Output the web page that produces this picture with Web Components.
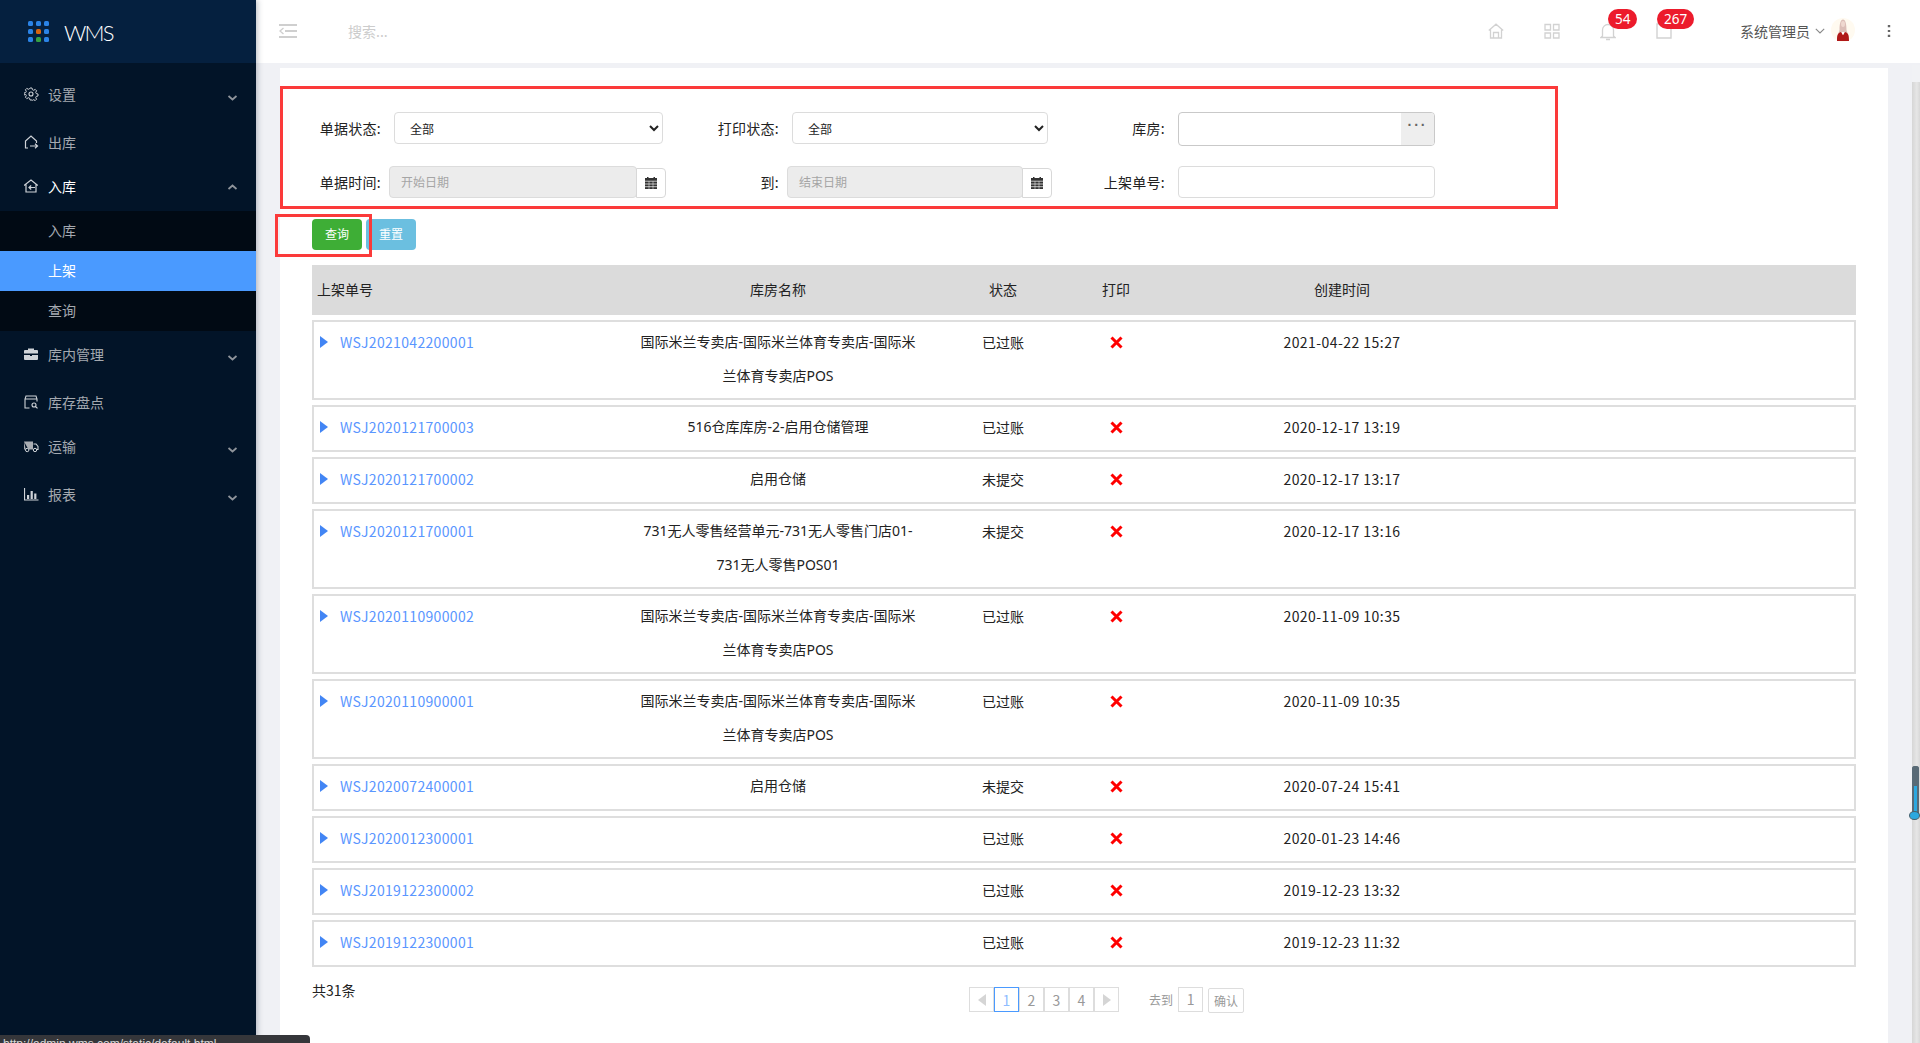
<!DOCTYPE html>
<html lang="zh-CN">
<head>
<meta charset="utf-8">
<title>WMS</title>
<style>
  html, body { margin: 0; height: 100%; overflow: hidden; }
  body { font-family: "Noto Sans CJK SC", "Noto Sans", sans-serif; font-size: 14px; color: #222; }
</style>
</head>
<body>
<wms-app>
  <wms-sidebar slot="sidebar">
    <wms-nav-item icon="gear" label="设置" arrow="down" style="--h:48px"></wms-nav-item>
    <wms-nav-item icon="out" label="出库" style="--h:48px"></wms-nav-item>
    <wms-nav-item icon="in" label="入库" arrow="up" open style="--h:40px;--mb:4px"></wms-nav-item>
    <wms-sub-item>入库</wms-sub-item>
    <wms-sub-item active>上架</wms-sub-item>
    <wms-sub-item>查询</wms-sub-item>
    <wms-nav-item icon="box" label="库内管理" arrow="down" style="--h:48px"></wms-nav-item>
    <wms-nav-item icon="check" label="库存盘点" style="--h:48px"></wms-nav-item>
    <wms-nav-item icon="truck" label="运输" arrow="down" style="--h:40px;--mb:4px"></wms-nav-item>
    <wms-nav-item icon="chart" label="报表" arrow="down" style="--h:48px"></wms-nav-item>
  </wms-sidebar>
  <wms-topbar slot="topbar"></wms-topbar>
  <wms-filter>
    <wms-select-field label="单据状态:" style="--lw:69px;--gap:13px;--cw:269px">全部</wms-select-field>
    <wms-select-field label="打印状态:" style="--lw:99px;--gap:13px;--cw:256px">全部</wms-select-field>
    <wms-picker-field label="库房:" style="--lw:80px;--gap:13px;--cw:257px"></wms-picker-field>
    <wms-date-field label="单据时间:" placeholder="开始日期" style="--lw:69px;--gap:8px;--cw:248px"></wms-date-field>
    <wms-date-field label="到:" placeholder="结束日期" style="--lw:99px;--gap:8px;--cw:236px"></wms-date-field>
    <wms-text-field label="上架单号:" style="--lw:80px;--gap:13px;--cw:257px"></wms-text-field>
  </wms-filter>
  <wms-actions></wms-actions>
  <wms-table-head></wms-table-head>
  <wms-row code="WSJ2021042200001" status="已过账" time="2021-04-22 15:27">国际米兰专卖店-国际米兰体育专卖店-国际米兰体育专卖店POS</wms-row>
  <wms-row code="WSJ2020121700003" status="已过账" time="2020-12-17 13:19">516仓库库房-2-启用仓储管理</wms-row>
  <wms-row code="WSJ2020121700002" status="未提交" time="2020-12-17 13:17">启用仓储</wms-row>
  <wms-row code="WSJ2020121700001" status="未提交" time="2020-12-17 13:16">731无人零售经营单元-731无人零售门店01-731无人零售POS01</wms-row>
  <wms-row code="WSJ2020110900002" status="已过账" time="2020-11-09 10:35">国际米兰专卖店-国际米兰体育专卖店-国际米兰体育专卖店POS</wms-row>
  <wms-row code="WSJ2020110900001" status="已过账" time="2020-11-09 10:35">国际米兰专卖店-国际米兰体育专卖店-国际米兰体育专卖店POS</wms-row>
  <wms-row code="WSJ2020072400001" status="未提交" time="2020-07-24 15:41">启用仓储</wms-row>
  <wms-row code="WSJ2020012300001" status="已过账" time="2020-01-23 14:46"></wms-row>
  <wms-row code="WSJ2019122300002" status="已过账" time="2019-12-23 13:32"></wms-row>
  <wms-row code="WSJ2019122300001" status="已过账" time="2019-12-23 11:32"></wms-row>
  <wms-pager total="共31条"></wms-pager>
</wms-app>

<script>
const NAV_ICONS = {
  gear: '<circle cx="7" cy="7" r="2" fill="none" stroke="currentColor" stroke-width="1.1"/><path d="M6 1h2l.4 1.7 1.3.6 1.5-.9 1.4 1.4-.9 1.5.6 1.3 1.7.4v2l-1.7.4-.6 1.3.9 1.5-1.4 1.4-1.5-.9-1.3.6L8 13H6l-.4-1.7-1.3-.6-1.5.9-1.4-1.4.9-1.5-.6-1.3L0 8V6l1.7-.4.6-1.3-.9-1.5 1.4-1.4 1.5.9 1.3-.6z" fill="none" stroke="currentColor" stroke-width="1"/>',
  out: '<path d="M4 13H1.5V6L7 1l5.5 5v2M1.5 13" fill="none" stroke="currentColor" stroke-width="1.2"/><path d="M6 11h7.5M11 8.8l2.5 2.2-2.5 2.2" fill="none" stroke="currentColor" stroke-width="1.2"/>',
  in: '<path d="M0 6.5 7 1l6.8 5.5M2 5.5V13h10V5.5" fill="none" stroke="currentColor" stroke-width="1.2"/><path d="M11 8.5H5.2M7.2 6.5 5 8.5l2.2 2" fill="none" stroke="currentColor" stroke-width="1.2"/>',
  box: '<path d="M4 3V1.5h6V3h3a1 1 0 0 1 1 1v2.5H0V4a1 1 0 0 1 1-1z" fill="currentColor"/><path d="M0 8h6v1h2V8h6v4a1 1 0 0 1-1 1H1a1 1 0 0 1-1-1z" fill="currentColor"/>',
  check: '<path d="M5.5 13H1V4l1-3h10l1 3v2.5M1 4h12" fill="none" stroke="currentColor" stroke-width="1.1"/><circle cx="10" cy="10" r="2" fill="none" stroke="currentColor" stroke-width="1.1"/><path d="m11.5 11.5 2 1.8" stroke="currentColor" stroke-width="1.1"/>',
  truck: '<path d="M0 2.5h9v8H4.5M1.8 10.5H0v-8" fill="#a9adb3"/><path d="M9.5 5H12l2 2.4v3.1h-1" fill="none" stroke="currentColor" stroke-width="1.1"/><circle cx="3.2" cy="11" r="1.7" fill="#021428" stroke="currentColor"/><circle cx="11" cy="11" r="1.7" fill="#021428" stroke="currentColor"/>',
  chart: '<path d="M.5 1v12h14" fill="none" stroke="currentColor" stroke-width="1.2"/><path d="M3 8h2.2v4H3zM6.6 4h2.2v8H6.6zM10.2 6.5h2.2V12h-2.2z" fill="currentColor"/>'
};

class WmsApp extends HTMLElement {
  constructor() {
    super();
    this.attachShadow({ mode: 'open' }).innerHTML = `
      <style>
        :host { display: flex; height: 100vh; background: #f0f1f5; position: relative; overflow: hidden; }
        .side { flex: 0 0 256px; position: relative; z-index: 2; box-shadow: 1px 0 6px rgba(40, 50, 70, .35); }
        .main { flex: 1 1 auto; min-width: 0; display: flex; flex-direction: column; }
        .panel {
          flex: 1 1 auto; min-height: 0;
          margin: 5px 32px 0 24px; padding: 44px 32px 0;
          background: #fff; box-sizing: border-box;
        }
        .mark { position: absolute; border: 3px solid #fb3a3a; box-sizing: border-box; z-index: 3; pointer-events: none; }
        .m1 { left: 280px; top: 86px; width: 1278px; height: 123px; }
        .m2 { left: 275px; top: 214px; width: 97px; height: 43px; }
        .status {
          position: absolute; left: 0; bottom: 0; width: 310px; height: 8px; z-index: 4;
          background: #35363a; border-top-right-radius: 4px; overflow: hidden;
          color: #d8d8d8; font: 12px/18px "Liberation Sans", sans-serif; padding-left: 3px; box-sizing: border-box;
        }
      </style>
      <div class="side"><slot name="sidebar"></slot></div>
      <div class="main">
        <slot name="topbar"></slot>
        <div class="panel"><slot></slot></div>
      </div>
      <wms-scrollbar></wms-scrollbar>
      <div class="mark m1"></div>
      <div class="mark m2"></div>
      <div class="status">http://admin.wms.com/static/default.html</div>`;
  }
}

class WmsSidebar extends HTMLElement {
  constructor() {
    super();
    this.attachShadow({ mode: 'open' }).innerHTML = `
      <style>
        :host { display: flex; flex-direction: column; height: 100%; background: #021428; }
        .logo { flex: 0 0 63px; display: flex; align-items: center; background: #05203f; }
        .dots { display: grid; grid-template-columns: repeat(3, 5px); gap: 3px; margin-left: 28px; }
        .dots i { width: 5px; height: 5px; border-radius: 1.5px; background: #2b83e6; }
        .dots i.o { background: #d9640f; }
        .dots i.g { background: #36a043; }
        .name { margin-left: 15px; margin-top: 2px; color: #fff; font: 300 22px/1 Lato, sans-serif; letter-spacing: -1.8px; }
        nav { padding-top: 8px; display: flex; flex-direction: column; }
      </style>
      <div class="logo">
        <div class="dots"><i></i><i></i><i></i><i></i><i class="o"></i><i></i><i></i><i class="g"></i><i></i></div>
        <div class="name">WMS</div>
      </div>
      <nav><slot></slot></nav>`;
  }
}

class WmsNavItem extends HTMLElement {
  constructor() {
    super();
    this.attachShadow({ mode: 'open' });
  }

  connectedCallback() {
    const arrow = this.getAttribute('arrow');
    const chevron = arrow === 'up' ? 'M1.5 6 5.5 2.5 9.5 6' : 'M1.5 2 5.5 5.5 9.5 2';
    this.shadowRoot.innerHTML = `
      <style>
        :host {
          display: flex; align-items: center; height: var(--h, 48px); margin-bottom: var(--mb, 0);
          padding-left: 24px; color: #a4a9b0; font-size: 14px;
        }
        :host([open]) { color: #fff; }
        .ico { width: 15px; height: 14px; color: #cfd3d8; flex: none; margin-top: -2px; }
        .label { margin-left: 9px; flex: 1 1 auto; margin-top: -2px; }
        .chev { width: 11px; height: 8px; margin-right: 18px; margin-top: 5px; color: #8f949b; }
        :host([open]) .chev { margin-top: 0; }
      </style>
      <svg class="ico" viewBox="0 0 15 14">${NAV_ICONS[this.getAttribute('icon')]}</svg>
      <span class="label">${this.getAttribute('label')}</span>
      ${arrow ? `<svg class="chev" viewBox="0 0 11 8"><path d="${chevron}" fill="none" stroke="currentColor" stroke-width="1.8"/></svg>` : ''}`;
  }
}

class WmsSubItem extends HTMLElement {
  constructor() {
    super();
    this.attachShadow({ mode: 'open' }).innerHTML = `
      <style>
        :host {
          display: flex; align-items: center; height: 40px; padding: 0 0 2px 48px; box-sizing: border-box;
          background: #010a14; color: #a4a9b0; font-size: 14px;
        }
        :host([active]) { background: #4a9aff; color: #fff; }
      </style>
      <slot></slot>`;
  }
}

class WmsTopbar extends HTMLElement {
  constructor() {
    super();
    this.attachShadow({ mode: 'open' }).innerHTML = `
      <style>
        :host { display: flex; align-items: center; flex: 0 0 63px; background: #fff; color: #555; font-size: 14px; }
        svg { display: block; flex: none; }
        .menu { margin: -2px 0 0 23px; }
        .search { margin-left: 51px; color: #ccc; flex: 1 1 auto; margin-top: -1px; }
        .tool { position: relative; width: 18px; height: 18px; margin-right: 38px; color: #d2d2d2; }
        .last { margin-right: 66px; }
        .user { margin-top: -2px; }
        .chev { margin: -1px 6px 0 5px; }
        .avatar { margin-top: -3px; }
        .dots { margin: -2px 29px 0 32px; }
      </style>
      <svg class="menu" width="18" height="14" viewBox="0 0 18 14"><path d="M0 1h18M6 7h12M0 13h18" stroke="#cfcfcf" stroke-width="2"/><path d="M4.5 4 1 7l3.5 3" fill="none" stroke="#cfcfcf" stroke-width="1.4"/></svg>
      <div class="search">搜索...</div>
      <div class="tool"><svg width="16" height="16" viewBox="0 0 16 16"><path d="M.8 7.5 8 1.2l7.2 6.3M2.5 6.5V15h11V6.5M5.5 15V9.5h5V15" fill="none" stroke="currentColor" stroke-width="1.3"/></svg></div>
      <div class="tool"><svg width="16" height="16" viewBox="0 0 16 16"><path d="M1 1.5h5.5v5.5H1zM9.5 1.5H15v5.5H9.5zM1 10h5.5v5H1zM9.5 10H15v5H9.5z" fill="none" stroke="currentColor" stroke-width="1.3"/></svg></div>
      <div class="tool"><svg width="16" height="18" viewBox="0 0 16 18"><path d="M2.5 13V7a5.5 5.5 0 0 1 11 0v6l1.5 1.5H1zM6 16.5h4" fill="none" stroke="currentColor" stroke-width="1.3"/></svg><wms-badge style="left:8px;top:-13.5px">54</wms-badge></div>
      <div class="tool last"><svg width="16" height="16" viewBox="0 0 16 16"><path d="M1 1h14v14H1z" fill="none" stroke="currentColor" stroke-width="1.4"/></svg><wms-badge style="left:1px;top:-13.5px">267</wms-badge></div>
      <span class="user">系统管理员</span>
      <svg class="chev" width="10" height="6" viewBox="0 0 10 6"><path d="M.8.8 5 5l4.2-4.2" fill="none" stroke="#888" stroke-width="1.1"/></svg>
      <svg class="avatar" width="24" height="24" viewBox="0 0 24 24"><circle cx="12" cy="12" r="12" fill="#fffaf0"/><path d="M8.5 12c0-6 1-10.5 3.5-10.5s3.500 4.500 3.500 10.500l1 3h-9z" fill="#dcbeb8"/><ellipse cx="12" cy="6" rx="2" ry="3" fill="#efd8d0"/><path d="M6 23c0-6 .5-8 4-9l2 3 2-3c3.500 1 4 3 4 9z" fill="#b01818"/><path d="m10.5 14 1.5 3 1.5-3z" fill="#fff"/></svg>
      <svg class="dots" width="4" height="14" viewBox="0 0 4 14"><path d="M.8 1h2.4v2.2H.8zM.8 5.9h2.4v2.2H.8zM.8 10.8h2.4V13H.8z" fill="#666"/></svg>`;
  }
}

class WmsBadge extends HTMLElement {
  constructor() {
    super();
    this.attachShadow({ mode: 'open' }).innerHTML = `
      <style>
        :host {
          position: absolute; display: block; padding: 0 7px; height: 20px; border-radius: 10px;
          background: #ec1b2c; color: #fff; font: 13.5px/20px "Noto Sans", sans-serif; white-space: nowrap;
        }
      </style>
      <slot></slot>`;
  }
}

class WmsFilter extends HTMLElement {
  constructor() {
    super();
    this.attachShadow({ mode: 'open' }).innerHTML = `
      <style>
        :host { display: grid; grid-template-columns: 368px 405px 1fr; grid-template-rows: 34px 32px; row-gap: 20px; margin-bottom: 21px; }
      </style>
      <slot></slot>`;
  }
}

const FIELD_STYLE = `
  :host { display: flex; align-items: flex-start; color: #222; }
  .label { width: var(--lw); margin-right: var(--gap); flex: none; text-align: right; line-height: 32px; font-size: 14px; white-space: nowrap; letter-spacing: .25px; }
  .ctl { box-sizing: border-box; width: var(--cw); height: 32px; border: 1px solid #dcdcdc; border-radius: 4px; background: #fff; flex: none; font-size: 12px; }
`;

class WmsSelectField extends HTMLElement {
  constructor() {
    super();
    this.attachShadow({ mode: 'open' });
  }

  connectedCallback() {
    this.shadowRoot.innerHTML = `
      <style>${FIELD_STYLE}
        select { padding: 0 0 0 11px; font-family: inherit; color: #222; outline: none; }
      </style>
      <div class="label">${this.getAttribute('label')}</div>
      <select class="ctl"><option>${this.textContent}</option></select>`;
  }
}

class WmsDateField extends HTMLElement {
  constructor() {
    super();
    this.attachShadow({ mode: 'open' });
  }

  connectedCallback() {
    this.shadowRoot.innerHTML = `
      <style>${FIELD_STYLE}
        .ctl { background: #ececec; color: #a5a5a5; padding-left: 11px; line-height: 30px; }
        .addon { box-sizing: border-box; width: 30px; height: 30px; margin-top: 2px; margin-left: -1px; background: #fff;
          border: 1px solid #d8d8d8; border-radius: 0 4px 4px 0; display: flex; align-items: center; justify-content: center; }
      </style>
      <div class="label">${this.getAttribute('label')}</div>
      <div class="ctl">${this.getAttribute('placeholder')}</div>
      <div class="addon"><svg width="12" height="12" viewBox="0 0 12 12"><path d="M2 0h1.5v1h5V0H10v1h2v11H0V1h2z" fill="#333"/><path d="M0 4.2h12M0 7h12M0 9.7h12" stroke="#fff" stroke-width=".7"/><path d="M4 4.2V12M8 4.2V12" stroke="#fff" stroke-width=".5"/></svg></div>`;
  }
}

class WmsPickerField extends HTMLElement {
  constructor() {
    super();
    this.attachShadow({ mode: 'open' });
  }

  connectedCallback() {
    this.shadowRoot.innerHTML = `
      <style>${FIELD_STYLE}
        .ctl { height: 34px; border-color: #c9c9c9; display: flex; justify-content: flex-end; overflow: hidden; }
        .more { width: 33px; background: #eee; color: #666; text-align: center; font: 700 14px/24px "Liberation Sans", sans-serif; letter-spacing: 2px; }
      </style>
      <div class="label">${this.getAttribute('label')}</div>
      <div class="ctl"><div class="more">···</div></div>`;
  }
}

class WmsTextField extends HTMLElement {
  constructor() {
    super();
    this.attachShadow({ mode: 'open' });
  }

  connectedCallback() {
    this.shadowRoot.innerHTML = `
      <style>${FIELD_STYLE}</style>
      <div class="label">${this.getAttribute('label')}</div>
      <div class="ctl"></div>`;
  }
}

class WmsActions extends HTMLElement {
  constructor() {
    super();
    this.attachShadow({ mode: 'open' }).innerHTML = `
      <style>
        :host { display: flex; gap: 4px; margin-bottom: 15px; }
        div { width: 50px; height: 31px; border-radius: 4px; color: #fff; font-size: 12px; line-height: 30px; text-align: center; }
        .go { background: #3eae36; }
        .reset { background: #6bbfe0; }
      </style>
      <div class="go">查询</div>
      <div class="reset">重置</div>`;
  }
}

const ROW_COLUMNS = 'grid-template-columns: 321.5px 285px 165px 61px 391px 1fr;';

class WmsTableHead extends HTMLElement {
  constructor() {
    super();
    this.attachShadow({ mode: 'open' }).innerHTML = `
      <style>
        :host { display: grid; ${ROW_COLUMNS} align-items: center; box-sizing: border-box; height: 50px; padding: 0 2px 2px; margin-bottom: 5px; background: #dbdbdb; color: #222; font-size: 14px; text-align: center; }
        .first { text-align: left; padding-left: 3px; }
      </style>
      <div class="first">上架单号</div><div>库房名称</div><div>状态</div><div>打印</div><div>创建时间</div>`;
  }
}

class WmsRow extends HTMLElement {
  constructor() {
    super();
    this.attachShadow({ mode: 'open' });
  }

  connectedCallback() {
    this.shadowRoot.innerHTML = `
      <style>
        :host {
          display: grid; ${ROW_COLUMNS} box-sizing: border-box; min-height: 47px; margin-bottom: 5px; padding: 3px 0 5px;
          border: 2px solid #dedede; color: #222; font-size: 14px; line-height: 34px; text-align: center;
        }
        :host(:last-of-type) { margin-bottom: 0; }
        .code { display: flex; align-items: flex-start; padding-left: 6px; text-align: left; }
        .arrow { flex: none; margin: 11px 12px 0 0; }
        a { color: #5a96ff; text-decoration: none; letter-spacing: .33px; }
        .name { font-family: "Noto Sans", "Noto Sans CJK SC", sans-serif; }
        .time { letter-spacing: .45px; }
        .mark { display: block; margin: 11px auto 0; }
      </style>
      <div class="code">
        <svg class="arrow" width="8" height="12" viewBox="0 0 8 12"><path d="M0 0l8 6-8 6z" fill="#4285f4"/></svg>
        <a>${this.getAttribute('code')}</a>
      </div>
      <div class="name"><slot></slot></div>
      <div>${this.getAttribute('status')}</div>
      <div><svg class="mark" width="13" height="13" viewBox="0 0 13 13"><path d="M1.5 1.5l10 10M11.5 1.5l-10 10" stroke="#f00" stroke-width="3"/></svg></div>
      <div class="time">${this.getAttribute('time')}</div>`;
  }
}

class WmsPager extends HTMLElement {
  constructor() {
    super();
    this.attachShadow({ mode: 'open' });
  }

  connectedCallback() {
    this.shadowRoot.innerHTML = `
      <style>
        :host { display: flex; align-items: flex-start; font-size: 12px; color: #999; margin-top: 0; }
        .total { width: 657px; padding-top: 13px; line-height: 20px; font-size: 14px; color: #222; }
        .pages { display: flex; margin-top: 20px; }
        .pages div { box-sizing: border-box; width: 25px; height: 25px; border: 1px solid #ddd; display: flex; align-items: center; justify-content: center; font-size: 14px; }
        .pages .on { border-color: #4a9aff; color: #8fbcff; }
        .goto { margin: 20px 0 0 30px; line-height: 26px; }
        .num { box-sizing: border-box; width: 25px; height: 25px; margin: 20px 0 0 5px; border: 1px solid #ddd; text-align: center; line-height: 23px; font-size: 14px; }
        .ok { box-sizing: border-box; width: 36px; height: 25px; margin: 21px 0 0 5px; border: 1px solid #ddd; border-radius: 2px; text-align: center; line-height: 23px; }
      </style>
      <div class="total">${this.getAttribute('total')}</div>
      <div class="pages">
        <div><svg width="8" height="12" viewBox="0 0 8 12"><path d="M8 0 0 6l8 6z" fill="#d5d5d5"/></svg></div>
        <div class="on">1</div><div>2</div><div>3</div><div>4</div>
        <div><svg width="8" height="12" viewBox="0 0 8 12"><path d="M0 0l8 6-8 6z" fill="#d5d5d5"/></svg></div>
      </div>
      <div class="goto">去到</div>
      <div class="num">1</div>
      <div class="ok">确认</div>`;
  }
}

class WmsScrollbar extends HTMLElement {
  constructor() {
    super();
    this.attachShadow({ mode: 'open' }).innerHTML = `
      <style>
        :host { position: absolute; left: 1912px; top: 65px; bottom: 0; width: 8px; z-index: 3;
          background: linear-gradient(90deg, #d6d6d6, #e6e6e6 60%, #d8d8d8); }
        .cap { height: 17px; background: #f1f2f5; }
        .thumb { position: absolute; left: 0; top: 701px; width: 7px; height: 50px; border-radius: 3px 3px 0 0;
          background: linear-gradient(#596a76 40%, #2ca8e0 40%); box-shadow: inset 2px 0 #596a76, inset -2px 0 #596a76; }
        .bulb { position: absolute; left: -3px; top: 746px; width: 11px; height: 9px; border-radius: 50%; background: #2ca8e0; border: 1px solid #44606e; box-sizing: border-box; }
      </style>
      <div class="cap"></div>
      <div class="thumb"></div>
      <div class="bulb"></div>`;
  }
}

customElements.define('wms-app', WmsApp);
customElements.define('wms-sidebar', WmsSidebar);
customElements.define('wms-nav-item', WmsNavItem);
customElements.define('wms-sub-item', WmsSubItem);
customElements.define('wms-topbar', WmsTopbar);
customElements.define('wms-badge', WmsBadge);
customElements.define('wms-filter', WmsFilter);
customElements.define('wms-select-field', WmsSelectField);
customElements.define('wms-date-field', WmsDateField);
customElements.define('wms-picker-field', WmsPickerField);
customElements.define('wms-text-field', WmsTextField);
customElements.define('wms-actions', WmsActions);
customElements.define('wms-table-head', WmsTableHead);
customElements.define('wms-row', WmsRow);
customElements.define('wms-pager', WmsPager);
customElements.define('wms-scrollbar', WmsScrollbar);
</script>
</body>
</html>
